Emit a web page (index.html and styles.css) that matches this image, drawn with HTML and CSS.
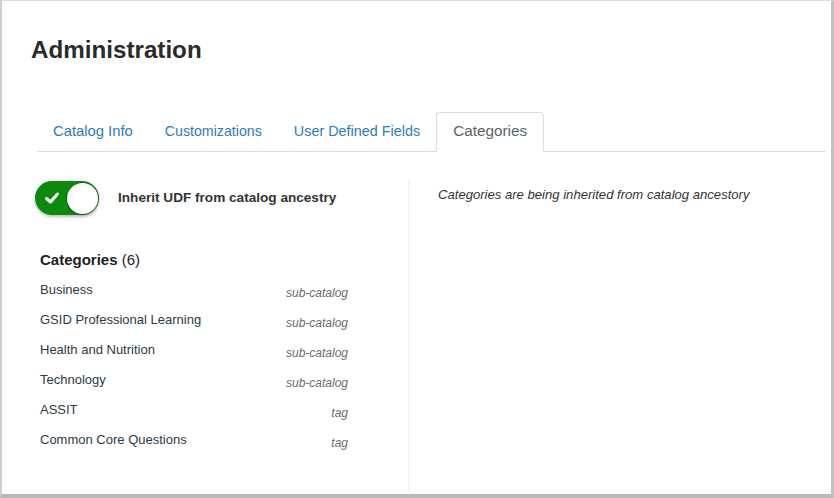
FILE: index.html
```html
<!DOCTYPE html>
<html>
<head>
<meta charset="utf-8">
<link rel="stylesheet" href="styles.css">
</head>
<body>
<div class="frame">
  <h1 class="title">Administration</h1>
  <ul class="tabs">
    <li class="tab">Catalog Info</li>
    <li class="tab">Customizations</li>
    <li class="tab">User Defined Fields</li>
    <li class="tab active">Categories</li>
  </ul>
  <div class="panel">
    <div class="left">
      <div class="toggle-row">
        <div class="toggle">
          <svg class="check" width="16" height="14" viewBox="0 0 16 14"><polyline points="2.5,7.5 6.5,11 13.5,3" fill="none" stroke="#fff" stroke-width="3" stroke-linecap="round" stroke-linejoin="round"/></svg>
          <span class="knob"></span>
        </div>
        <span class="toggle-label">Inherit UDF from catalog ancestry</span>
      </div>
      <div class="cats">
        <div class="cats-head"><b>Categories</b> (6)</div>
        <div class="cat"><span class="name">Business</span><span class="kind">sub-catalog</span></div>
        <div class="cat"><span class="name">GSID Professional Learning</span><span class="kind">sub-catalog</span></div>
        <div class="cat"><span class="name">Health and Nutrition</span><span class="kind">sub-catalog</span></div>
        <div class="cat"><span class="name">Technology</span><span class="kind">sub-catalog</span></div>
        <div class="cat"><span class="name">ASSIT</span><span class="kind">tag</span></div>
        <div class="cat"><span class="name">Common Core Questions</span><span class="kind">tag</span></div>
      </div>
    </div>
    <div class="right">
      <p class="note">Categories are being inherited from catalog ancestory</p>
    </div>
  </div>
</div>
</body>
</html>
```

FILE: styles.css
```css
html, body {
  margin: 0;
  padding: 0;
  background: #fff;
}
body {
  font-family: "Liberation Sans", Arial, sans-serif;
  color: #333;
}
.frame {
  box-sizing: border-box;
  width: 834px;
  height: 498px;
  border-top: 1px solid #dedede;
  border-left: 2px solid #cfcfcf;
  border-right: 3px solid #c2c2c2;
  border-bottom: 4px solid #b9b9b9;
  padding: 0 5px 4px 29px;
  display: flex;
  flex-direction: column;
  overflow: hidden;
}
.title {
  margin: 35px 0 0 0;
  font-size: 24.2px;
  line-height: 28px;
  font-weight: bold;
  color: #2b2b2b;
}
.tabs {
  list-style: none;
  margin: 48px 0 0 6px;
  padding: 0;
  display: flex;
  border-bottom: 1px solid #dddddd;
}
.tab {
  font-size: 14.8px;
  line-height: 20px;
  padding: 8px 15px 10px 15px;
  border: 1px solid transparent;
  border-radius: 4px 4px 0 0;
  margin-bottom: -1px;
  color: #2a7dbd;
}
.tab:nth-child(2) {
  font-size: 14.2px;
}
.tab:nth-child(3) {
  font-size: 14.4px;
}
.tab.active {
  font-size: 15.3px;
  padding: 8px 16px 10px 16px;
  color: #59636b;
  border-color: #dddddd;
  border-bottom-color: #fff;
  background: #fff;
}
.panel {
  flex: 1;
  display: flex;
  margin-top: 29px;
  margin-left: 4px;
}
.left {
  width: 373px;
  border-right: 1px solid #eeeeee;
}
.toggle-row {
  display: flex;
  align-items: center;
}
.toggle {
  box-sizing: border-box;
  width: 64px;
  height: 34px;
  border-radius: 17px;
  background: #0b8a0b;
  display: flex;
  align-items: center;
  justify-content: space-between;
  padding: 0 1px 0 9px;
  box-shadow: 0 2px 3px rgba(0, 0, 0, 0.25);
}
.check {
  display: block;
}
.knob {
  width: 31px;
  height: 31px;
  border-radius: 50%;
  background: #fff;
  box-shadow: 0 0 0 1px rgba(0, 0, 0, 0.14), 0 1px 2px rgba(0, 0, 0, 0.3);
}
.toggle-label {
  margin-left: 19px;
  font-size: 13.6px;
  line-height: 20px;
  font-weight: bold;
  color: #333;
}
.cats {
  margin-left: 5px;
  width: 308px;
  margin-top: 35px;
}
.cats-head {
  font-size: 15px;
  line-height: 20px;
  color: #222;
  margin-bottom: 5px;
}
.cat {
  display: flex;
  justify-content: space-between;
  align-items: flex-start;
  height: 30px;
}
.name {
  font-size: 13px;
  line-height: 30px;
  color: #2d3b45;
}
.kind {
  font-size: 12px;
  line-height: 30px;
  padding-top: 3px;
  font-style: italic;
  color: #6b6b6b;
}
.right {
  flex: 1;
  padding-left: 29px;
}
.note {
  margin: 5px 0 0 0;
  font-size: 13.1px;
  line-height: 18px;
  font-style: italic;
  color: #333;
}
```
